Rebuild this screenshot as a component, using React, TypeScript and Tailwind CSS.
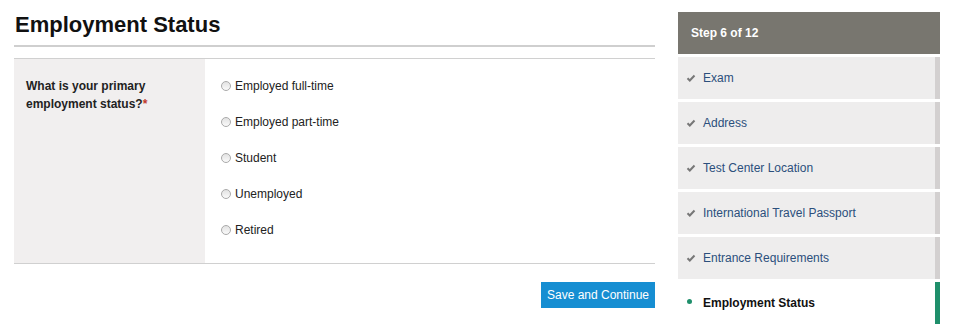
import React from 'react';

export default function App() {
    const options = ["Employed full-time", "Employed part-time", "Student", "Unemployed", "Retired"];

    const steps = ["Exam", "Address", "Test Center Location", "International Travel Passport", "Entrance Requirements"];

    return (
        <div className="w-[965px] h-[325px] bg-white overflow-hidden flex font-['Liberation_Sans',Arial,sans-serif]">
            {/* main column */}
            <div className="w-[641px] ml-[14px] flex flex-col">
                <h1 className="text-[22px] font-bold text-[#111] leading-none pt-[14px] pl-[1px] h-[45px]">
                    Employment Status
                </h1>
                <div className="h-[2px] bg-[#cfcfcf]" />

                <div className="mt-[11px] border-t border-b border-[#d0d0d0] flex h-[206px]">
                    <div className="w-[191px] bg-[#f1efef] pl-[12px] pt-[18px]">
                        <p className="text-[12px] font-bold text-[#222] leading-[18px]">
                            What is your primary<br />employment status?<span className="text-[#c0392b]">*</span>
                        </p>
                    </div>
                    <div className="flex-1 pl-[16px] pt-[18px] flex flex-col gap-[18px]">
                        {options.map((opt) => (
                            <label key={opt} className="flex items-center h-[18px] text-[12px] text-[#222] cursor-pointer">
                                <span className="w-[10px] h-[10px] rounded-full border border-[#aaa] bg-gradient-to-b from-[#e2e2e2] to-[#fafafa] mr-[4px]" />
                                {opt}
                            </label>
                        ))}
                    </div>
                </div>

                <div className="flex justify-end mt-[18px]">
                    <button className="w-[114px] h-[26px] bg-[#168ed2] text-white text-[12px]">
                        Save and Continue
                    </button>
                </div>
            </div>

            {/* progress sidebar */}
            <div className="ml-[23px] w-[262px] pt-[12px] flex flex-col gap-[3px]">
                <div className="h-[42px] bg-[#78766f] text-white text-[12px] font-bold flex items-center pl-[13px]">
                    Step 6 of 12
                </div>
                {steps.map((s) => (
                    <div key={s} className="h-[42px] bg-[#eeeded] border-r-[5px] border-[#d3d0d0] flex items-center pl-[8px] text-[12px] text-[#2b4f7c]">
                        <svg width="10" height="10" viewBox="0 0 10 10" className="mr-[7px]">
                            <path d="M1.5 5.2 L3.8 7.5 L8.5 2.5" stroke="#777" strokeWidth="2" fill="none" />
                        </svg>
                        {s}
                    </div>
                ))}
                <div className="h-[42px] bg-white border-r-[5px] border-[#1f8f6b] flex items-center pl-[9px] text-[12px] font-bold text-[#111]">
                    <span className="w-[5px] h-[5px] rounded-full bg-[#1f8f6b] mr-[11px] -mt-[3px]" />
                    Employment Status
                </div>
            </div>
        </div>
    );
}
